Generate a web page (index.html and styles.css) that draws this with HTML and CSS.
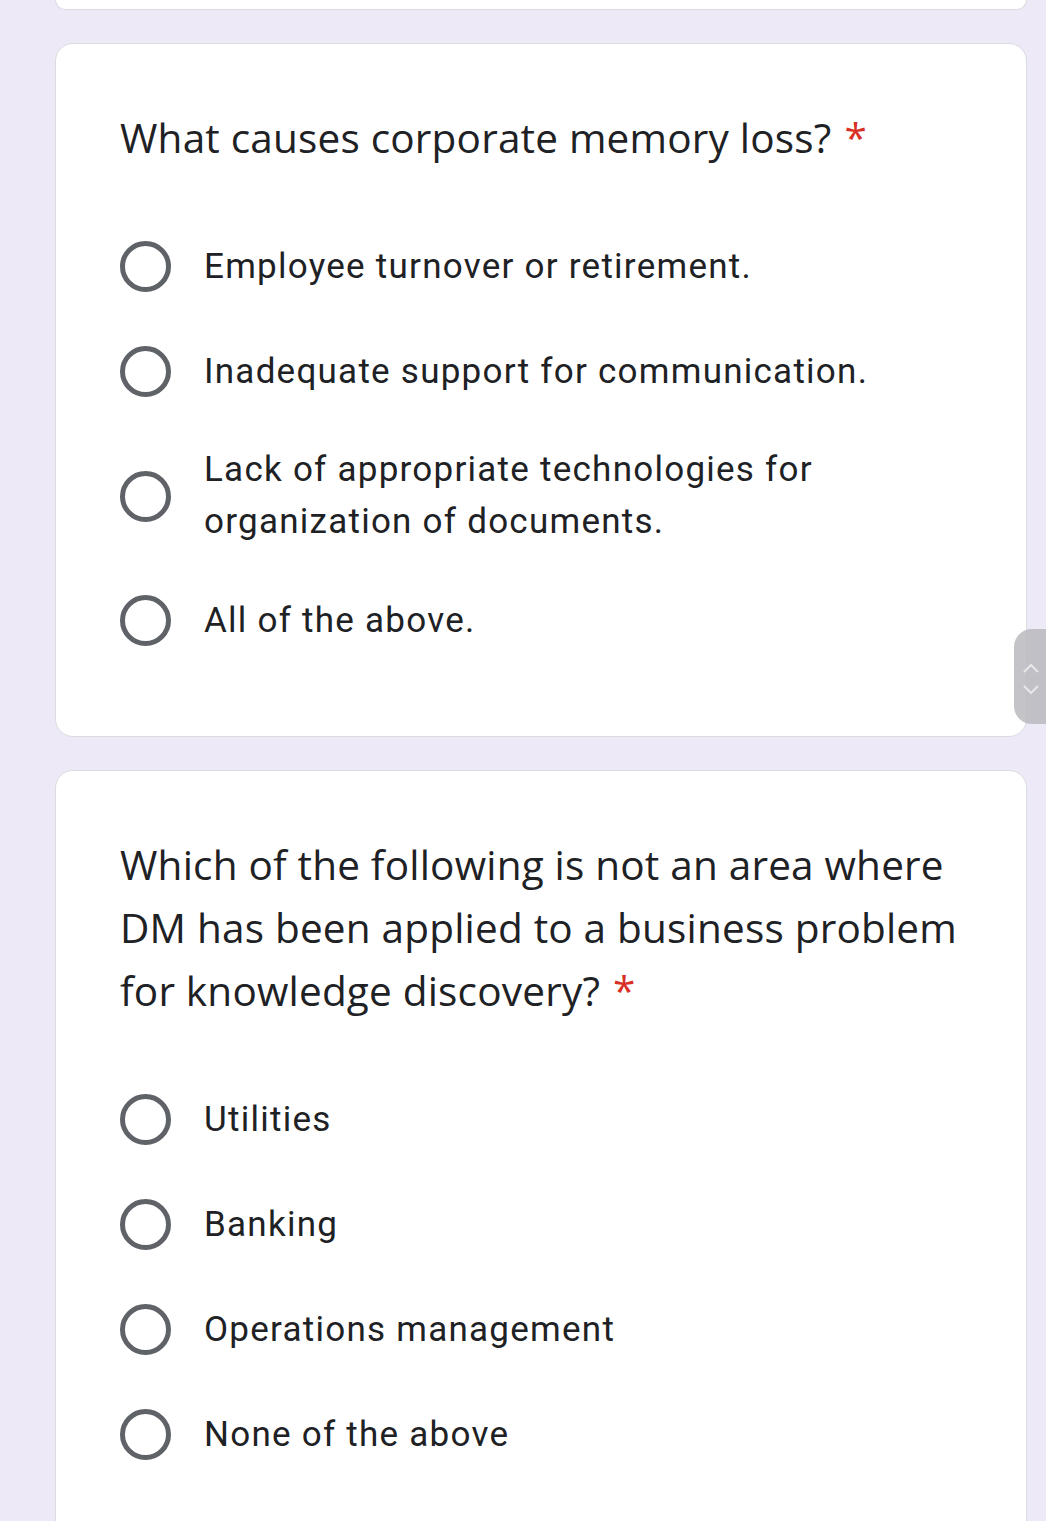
FILE: index.html
```html
<!DOCTYPE html>
<html>
<head>
<meta charset="utf-8">
<link rel="stylesheet" href="styles.css">
</head>
<body>
<div class="page">
  <div class="card card-stub"></div>

  <div class="card">
    <div class="question">What causes corporate memory loss?<span class="req">*</span></div>
    <div class="options">
      <div class="option"><span class="radio"></span><span class="label">Employee turnover or retirement.</span></div>
      <div class="option"><span class="radio"></span><span class="label">Inadequate support for communication.</span></div>
      <div class="option"><span class="radio"></span><span class="label">Lack of appropriate technologies for organization of documents.</span></div>
      <div class="option"><span class="radio"></span><span class="label">All of the above.</span></div>
    </div>
  </div>

  <div class="card">
    <div class="question">Which of the following is not an area where DM has been applied to a business problem for knowledge discovery?<span class="req">*</span></div>
    <div class="options">
      <div class="option"><span class="radio"></span><span class="label">Utilities</span></div>
      <div class="option"><span class="radio"></span><span class="label">Banking</span></div>
      <div class="option"><span class="radio"></span><span class="label">Operations management</span></div>
      <div class="option"><span class="radio"></span><span class="label">None of the above</span></div>
    </div>
  </div>
</div>

<div class="scroller">
  <svg width="20" height="60" viewBox="0 0 20 60">
    <path d="M4 25 L11 18 L18 25" fill="none" stroke="#e8e8e8" stroke-width="2"/>
    <path d="M4 39 L11 46 L18 39" fill="none" stroke="#e8e8e8" stroke-width="2"/>
  </svg>
</div>
</body>
</html>
```

FILE: styles.css
```css
html, body {
  margin: 0;
  padding: 0;
  background: #ede9f7;
}

body {
  height: 1521px;
  overflow: hidden;
}

.page {
  display: flex;
  flex-direction: column;
  gap: 33px;
  padding: 0 19px 0 55px;
}

.card {
  background: #ffffff;
  border: 1px solid #dadce0;
  border-radius: 18px;
  padding: 62px 50px 63px 64px;
}

.card-stub {
  height: 9px;
  padding: 0;
  border-top: none;
  border-radius: 0 0 18px 18px;
}

.question {
  font-family: "Open Sans", "Liberation Sans", sans-serif;
  font-size: 40.5px;
  letter-spacing: 0.2px;
  line-height: 63px;
  color: #202124;
  max-width: 860px;
}

.req {
  display: inline-block;
  color: #d93025;
  margin-left: 13px;
  letter-spacing: 0;
}

.options {
  margin-top: 45px;
  display: flex;
  flex-direction: column;
}

.option {
  display: flex;
  align-items: center;
  gap: 33px;
  min-height: 105px;
  padding: 20px 0;
  box-sizing: border-box;
}

.radio {
  flex: none;
  width: 41px;
  height: 41px;
  border: 5px solid #5f6368;
  border-radius: 50%;
}

.label {
  font-family: Roboto, "Liberation Sans", sans-serif;
  font-size: 35px;
  letter-spacing: 1.25px;
  line-height: 52px;
  color: #202124;
  max-width: 760px;
}

.scroller {
  position: absolute;
  left: 1014px;
  top: 629px;
  width: 50px;
  height: 95px;
  border-radius: 18px;
  background: rgba(185, 185, 190, 0.85);
  display: flex;
  align-items: center;
  padding-left: 6px;
  box-sizing: border-box;
}
```
